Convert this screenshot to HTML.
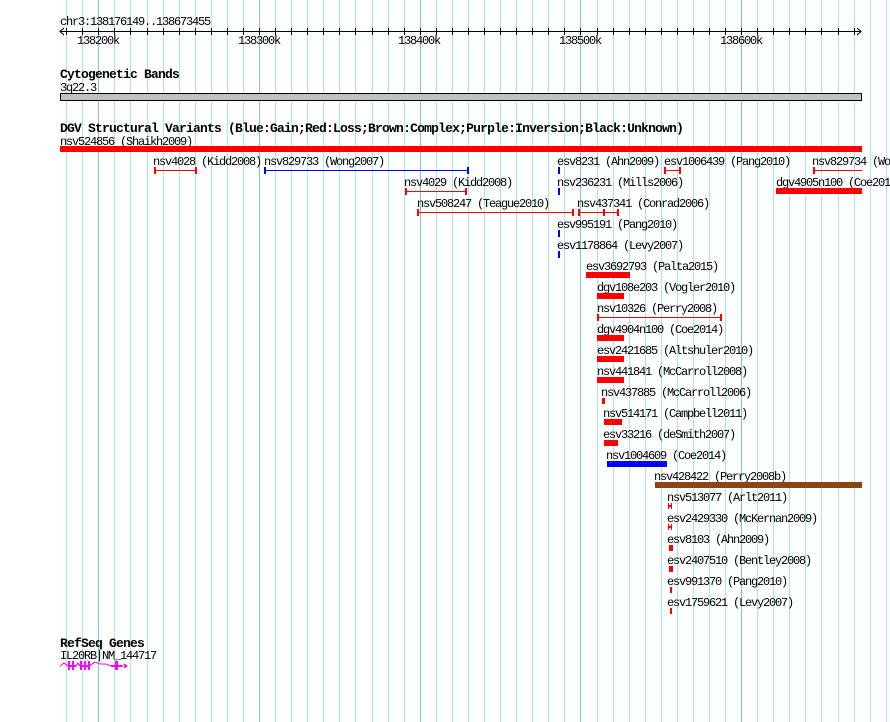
<!DOCTYPE html>
<html><head><meta charset="utf-8"><style>
html,body{margin:0;padding:0;background:#fff;}
svg{display:block}
text{font-family:"Liberation Mono",monospace;font-size:12px;letter-spacing:-1.2px;fill:#000}
.b{font-weight:bold;font-size:13px;letter-spacing:-0.8px}
</style></head><body>
<svg width="890" height="722" viewBox="0 0 890 722" xmlns="http://www.w3.org/2000/svg" shape-rendering="crispEdges">
<path stroke="#a8e6ee" stroke-width="1" fill="none" d="M66.5 0V722M82.5 0V722M114.5 0V722M130.5 0V722M147.5 0V722M163.5 0V722M179.5 0V722M195.5 0V722M211.5 0V722M227.5 0V722M243.5 0V722M275.5 0V722M291.5 0V722M307.5 0V722M323.5 0V722M339.5 0V722M355.5 0V722M372.5 0V722M388.5 0V722M404.5 0V722M436.5 0V722M452.5 0V722M468.5 0V722M484.5 0V722M500.5 0V722M516.5 0V722M532.5 0V722M548.5 0V722M564.5 0V722M597.5 0V722M613.5 0V722M629.5 0V722M645.5 0V722M661.5 0V722M677.5 0V722M693.5 0V722M709.5 0V722M725.5 0V722M757.5 0V722M773.5 0V722M789.5 0V722M805.5 0V722M821.5 0V722M838.5 0V722M854.5 0V722M870.5 0V722M886.5 0V722"/>
<path stroke="#7cc4e4" stroke-width="1" fill="none" d="M98.5 0V722M259.5 0V722M420.5 0V722M580.5 0V722M741.5 0V722"/>
<path stroke="#000" stroke-width="1" fill="none" d="M66.5 28V35M82.5 28V35M98.5 28V35M114.5 28V35M130.5 28V35M147.5 28V35M163.5 28V35M179.5 28V35M195.5 28V35M211.5 28V35M227.5 28V35M243.5 28V35M259.5 28V35M275.5 28V35M291.5 28V35M307.5 28V35M323.5 28V35M339.5 28V35M355.5 28V35M372.5 28V35M388.5 28V35M404.5 28V35M420.5 28V35M436.5 28V35M452.5 28V35M468.5 28V35M484.5 28V35M500.5 28V35M516.5 28V35M532.5 28V35M548.5 28V35M564.5 28V35M580.5 28V35M597.5 28V35M613.5 28V35M629.5 28V35M645.5 28V35M661.5 28V35M677.5 28V35M693.5 28V35M709.5 28V35M725.5 28V35M741.5 28V35M757.5 28V35M773.5 28V35M789.5 28V35M805.5 28V35M821.5 28V35M838.5 28V35M854.5 28V35"/>
<!-- ruler -->
<text x="60" y="25">chr3:138176149..138673455</text>
<line x1="60" y1="31.5" x2="861" y2="31.5" stroke="#000"/>
<path d="M64 28 L60 31.5 L64 35 M857 28 L861 31.5 L857 35" stroke="#000" fill="none"/>
<text x="77" y="44">138200k</text>
<text x="238" y="44">138300k</text>
<text x="398" y="44">138400k</text>
<text x="559" y="44">138500k</text>
<text x="720" y="44">138600k</text>
<text x="60" y="78" class="b">Cytogenetic Bands</text>
<text x="60" y="91">3q22.3</text>
<rect x="60.5" y="93.5" width="801" height="7" fill="#c0c0c0" stroke="#000"/>
<text x="60" y="132" class="b">DGV Structural Variants (Blue:Gain;Red:Loss;Brown:Complex;Purple:Inversion;Black:Unknown)</text>
<text x="60" y="145">nsv524856 (Shaikh2009)</text>
<rect x="60" y="146" width="802" height="6" fill="#f00"/>
<!-- row2 -->
<text x="153" y="165">nsv4028 (Kidd2008)</text>
<text x="264" y="165">nsv829733 (Wong2007)</text>
<text x="557" y="165">esv8231 (Ahn2009)</text>
<text x="664" y="165">esv1006439 (Pang2010)</text>
<text x="812" y="165">nsv829734 (Wong2007)</text>
<g fill="#f00">
<rect x="155" y="170" width="41" height="1"/><rect x="154" y="167" width="2" height="7"/><rect x="195" y="167" width="2" height="7"/>
<rect x="665" y="170" width="15" height="1"/><rect x="664" y="167" width="2" height="7"/><rect x="679" y="167" width="2" height="7"/>
<rect x="813" y="170" width="49" height="1"/><rect x="813" y="167" width="2" height="7"/>
</g>
<g fill="#00f">
<rect x="265" y="170" width="203" height="1"/><rect x="264" y="167" width="2" height="7"/><rect x="467" y="167" width="2" height="7"/>
<rect x="558" y="167" width="2" height="7"/>
</g>
<!-- row3 -->
<text x="404" y="186">nsv4029 (Kidd2008)</text>
<text x="557" y="186">nsv236231 (Mills2006)</text>
<text x="776" y="186">dgv4905n100 (Coe2014)</text>
<g fill="#f00">
<rect x="406" y="191" width="60" height="1"/><rect x="405" y="188" width="2" height="7"/><rect x="465" y="188" width="2" height="7"/>
<rect x="776" y="188" width="86" height="6"/>
</g>
<rect x="558" y="188" width="2" height="7" fill="#00f"/>
<!-- row4 -->
<text x="417" y="207">nsv508247 (Teague2010)</text>
<text x="577" y="207">nsv437341 (Conrad2006)</text>
<g fill="#f00">
<rect x="418" y="212" width="155" height="1"/><rect x="417" y="209" width="2" height="7"/><rect x="572" y="209" width="2" height="7"/>
<rect x="579" y="212" width="39" height="1"/><rect x="578" y="209" width="2" height="7"/><rect x="603" y="209" width="2" height="7"/><rect x="617" y="209" width="2" height="7"/>
</g>
<text x="557" y="228">esv995191 (Pang2010)</text>
<rect x="558" y="230" width="2" height="7" fill="#00f"/>
<text x="557" y="249">esv1178864 (Levy2007)</text>
<rect x="558" y="251" width="2" height="7" fill="#00f"/>
<text x="586" y="270">esv3692793 (Palta2015)</text>
<rect x="586" y="272" width="44" height="6" fill="#f00"/>
<text x="597" y="291">dgv108e203 (Vogler2010)</text>
<rect x="597" y="293" width="27" height="6" fill="#f00"/>
<text x="597" y="312">nsv10326 (Perry2008)</text>
<g fill="#f00"><rect x="598" y="317" width="123" height="1"/><rect x="597" y="314" width="2" height="7"/><rect x="720" y="314" width="2" height="7"/></g>
<text x="597" y="333">dgv4904n100 (Coe2014)</text>
<rect x="597" y="335" width="27" height="6" fill="#f00"/>
<text x="597" y="354">esv2421685 (Altshuler2010)</text>
<rect x="597" y="356" width="27" height="6" fill="#f00"/>
<text x="597" y="375">nsv441841 (McCarroll2008)</text>
<rect x="597" y="377" width="27" height="6" fill="#f00"/>
<text x="601" y="396">nsv437885 (McCarroll2006)</text>
<rect x="602" y="398" width="3" height="6" fill="#f00"/>
<text x="603" y="417">nsv514171 (Campbell2011)</text>
<rect x="604" y="419" width="18" height="6" fill="#f00"/>
<text x="603" y="438">esv33216 (deSmith2007)</text>
<rect x="604" y="440" width="14" height="6" fill="#f00"/>
<text x="606" y="459">nsv1004609 (Coe2014)</text>
<rect x="607" y="461" width="60" height="6" fill="#00f"/>
<text x="654" y="480">nsv428422 (Perry2008b)</text>
<rect x="655" y="482" width="207" height="6" fill="#8b4513"/>
<text x="667" y="501">nsv513077 (Arlt2011)</text>
<g fill="#f00"><rect x="668" y="503" width="1" height="6"/><rect x="671" y="503" width="1" height="6"/><rect x="668" y="505" width="4" height="2"/></g>
<text x="667" y="522">esv2429330 (McKernan2009)</text>
<g fill="#f00"><rect x="668" y="524" width="1" height="6"/><rect x="671" y="524" width="1" height="6"/><rect x="668" y="526" width="4" height="2"/></g>
<text x="667" y="543">esv8103 (Ahn2009)</text>
<rect x="669" y="545" width="4" height="6" fill="#f00"/>
<text x="667" y="564">esv2407510 (Bentley2008)</text>
<rect x="669" y="566" width="4" height="6" fill="#f00"/>
<text x="667" y="585">esv991370 (Pang2010)</text>
<rect x="670" y="587" width="2" height="6" fill="#f00"/>
<text x="667" y="606">esv1759621 (Levy2007)</text>
<rect x="670" y="608" width="2" height="6" fill="#f00"/>
<!-- RefSeq -->
<text x="60" y="647" class="b">RefSeq Genes</text>
<text x="60" y="659">IL20RB|NM_144717</text>
<g stroke="#f0f" fill="none">
<path d="M60 666 L64 663 L68 666 M76 666 L78 663 L80 666 M89 666 L95 662 L100 664 L106 664 L111 666 M122 666 L127 666 M124 664 L127 666 L124 668"/>
</g>
<g fill="#f0f">
<rect x="68" y="661" width="2" height="9"/><rect x="72" y="661" width="2" height="9"/><rect x="70" y="665" width="6" height="2"/>
<rect x="80" y="661" width="2" height="9"/><rect x="84" y="661" width="2" height="9"/><rect x="88" y="661" width="2" height="9"/><rect x="82" y="665" width="7" height="2"/>
<rect x="111" y="665" width="7" height="2"/><rect x="115" y="661" width="3" height="9"/><rect x="118" y="665" width="4" height="2"/>
</g>
</svg>
</body></html>
